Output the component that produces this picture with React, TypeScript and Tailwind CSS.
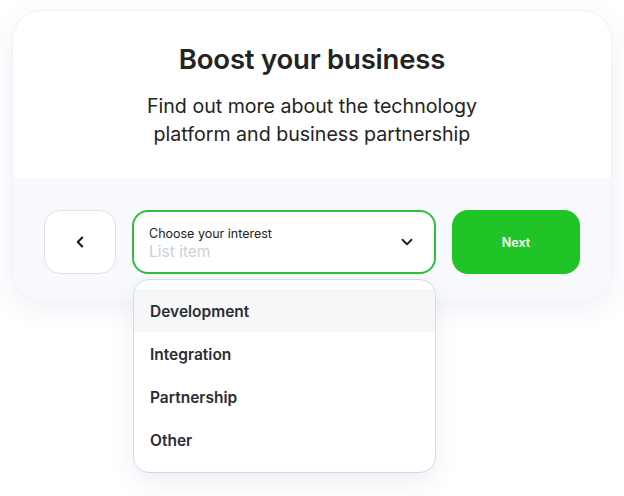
import { ChevronDown, ChevronLeft } from 'lucide-react'

const ITEMS = ['Development', 'Integration', 'Partnership', 'Other']

export default function App() {
  return (
    <div className="w-[624px] h-[496px] bg-white pt-[10px] px-[12px] font-['Inter','Noto_Sans',sans-serif]">
      <div className="relative w-[600px] h-[290px] rounded-[30px] bg-white shadow-[0_8px_28px_rgba(40,70,140,0.08)] border border-[#eef3fb]">
        <div className="h-[167px] flex flex-col items-center pt-[29px]">
          <h1 className="text-[27.5px] leading-[38px] font-semibold text-[#232323] tracking-[-0.2px]">Boost your business</h1>
          <p className="mt-[14px] text-[19.6px] leading-[28px] text-[#232323] text-center">
            Find out more about the technology
            <br />
            platform and business partnership
          </p>
        </div>
        <div className="h-[122px] rounded-b-[30px] bg-[#f7f9fc] flex items-start gap-[16px] pt-[32px] pl-[31px]">
          <button className="w-[72px] h-[64px] rounded-[16px] bg-white border border-[#dfe2e8] flex items-center justify-center text-[#111]">
            <ChevronLeft size={18} strokeWidth={2.5} />
          </button>
          <div className="w-[304px] h-[64px] rounded-[16px] bg-white border-2 border-[#2fbf3a] flex items-center pl-[15px] pr-[18px]">
            <div className="flex-1 flex flex-col pt-[3px]">
              <span className="text-[12.5px] leading-[16px] text-[#232323]">Choose your interest</span>
              <span className="text-[15.5px] leading-[20px] text-[#cdd0da]">List item</span>
            </div>
            <ChevronDown size={18} strokeWidth={2.5} className="text-[#222]" />
          </div>
          <button className="w-[128px] h-[64px] pt-[3px] rounded-[16px] bg-[#20c427] text-white text-[12.5px] font-semibold">Next</button>
        </div>
        <div className="absolute left-[120px] top-[268px] w-[303px] h-[194px] rounded-[16px] bg-white border border-[#d3daf0] shadow-[0_10px_24px_rgba(40,60,120,0.08)] pt-[9px] overflow-hidden">
          {ITEMS.map((item, i) => (
            <div
              key={item}
              className={`h-[43px] flex items-center pl-[16px] pt-[3px] text-[15.5px] font-semibold text-[#2a2c38] ${i === 0 ? 'bg-[#f6f7f9]' : ''}`}
            >
              {item}
            </div>
          ))}
        </div>
      </div>
    </div>
  )
}
